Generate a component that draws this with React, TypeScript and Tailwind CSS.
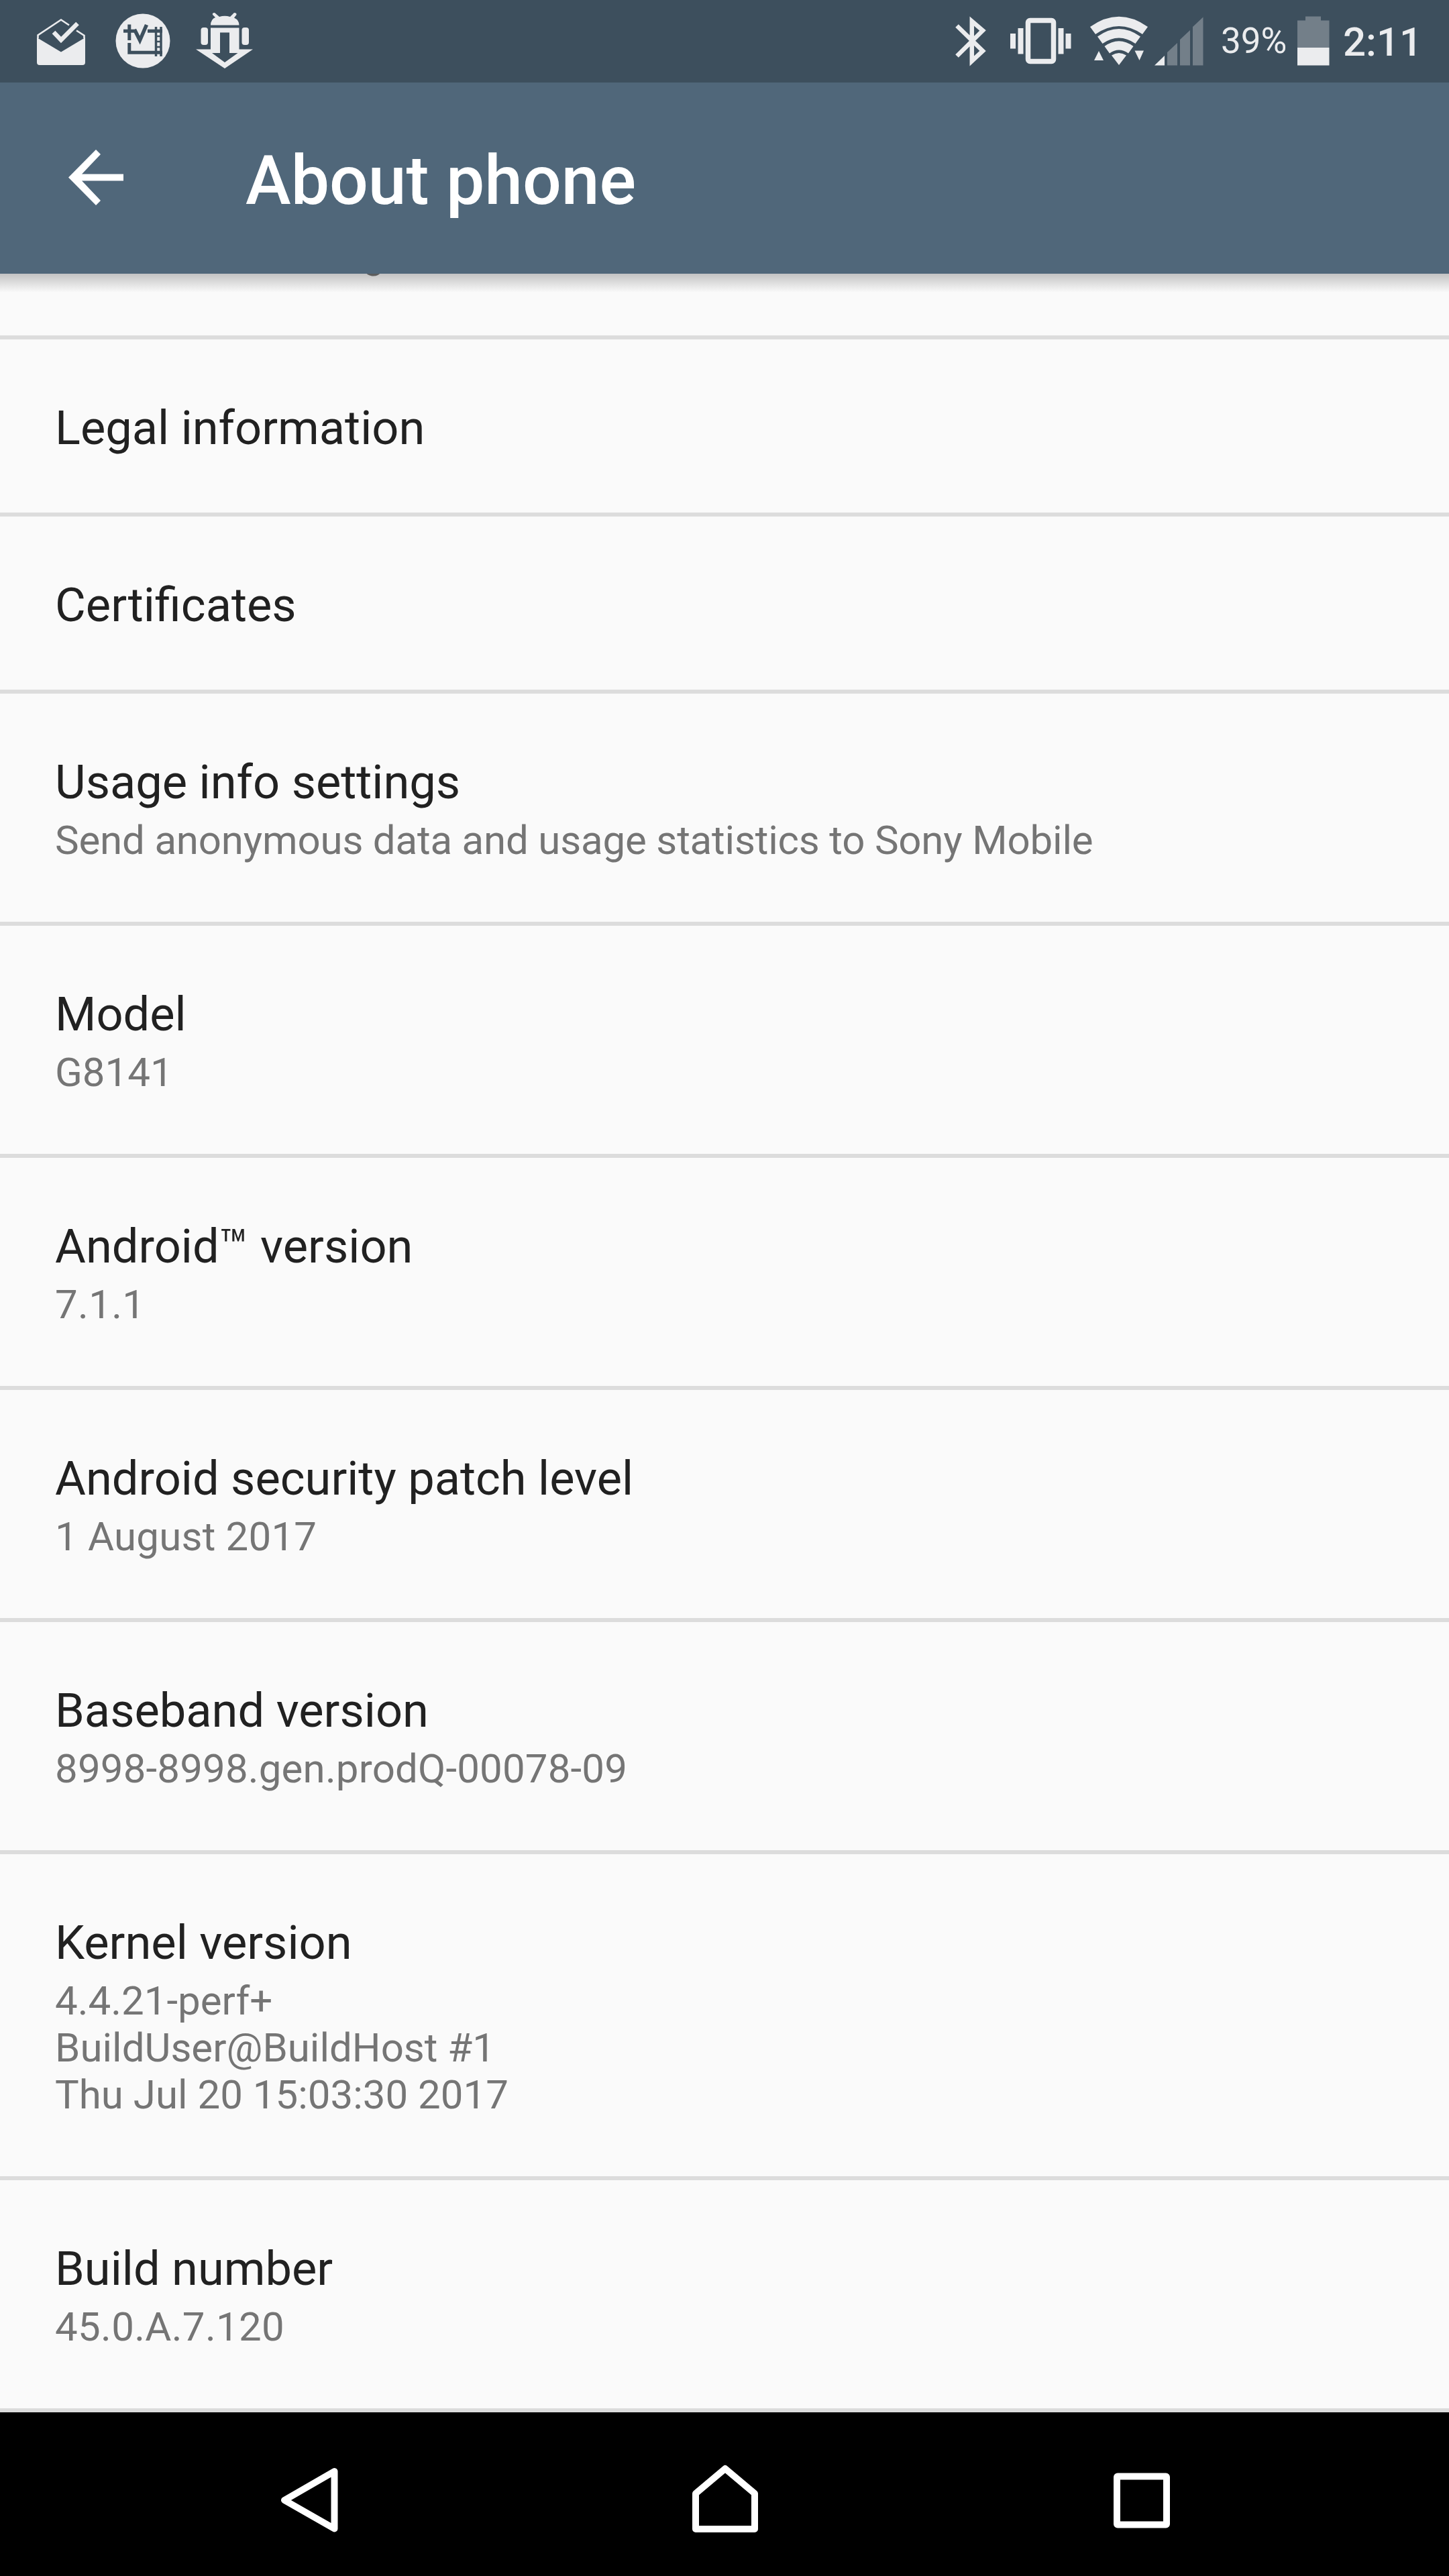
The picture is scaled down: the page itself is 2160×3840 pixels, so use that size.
import type { ReactNode } from 'react';

interface InfoItem {
    title: string;
    summary?: string[];
    tracking?: string;
}

const items: InfoItem[] = [
    { title: 'Legal information' },
    { title: 'Certificates' },
    {
        title: 'Usage info settings',
        summary: ['Send anonymous data and usage statistics to Sony Mobile'],
        tracking: 'tracking-[-0.18px]',
    },
    { title: 'Model', summary: ['G8141'] },
    { title: 'Android™ version', summary: ['7.1.1'], tracking: 'tracking-[0.3px]' },
    { title: 'Android security patch level', summary: ['1 August 2017'], tracking: 'tracking-[0.2px]' },
    { title: 'Baseband version', summary: ['8998-8998.gen.prodQ-00078-09'], tracking: 'tracking-[0.16px]' },
    { title: 'Kernel version', summary: ['4.4.21-perf+', 'BuildUser@BuildHost #1', 'Thu Jul 20 15:03:30 2017'] },
    { title: 'Build number', summary: ['45.0.A.7.120'], tracking: 'tracking-[0.3px]' },
];

function Icon({ w, h, className = '', children }: { w: number; h: number; className?: string; children: ReactNode }) {
    return (
        <svg width={w} height={h} viewBox={`0 0 ${w} ${h}`} fill="currentColor" className={`shrink-0 ${className}`}>
            {children}
        </svg>
    );
}

function StatusBar() {
    return (
        <div className="flex h-[123px] shrink-0 justify-between bg-[#3d4f5d] pl-[54px] text-[#ebecee]">
            <div className="flex">
                {/* Inbox */}
                <Icon w={74} h={123}>
                    <path d="M1 56 L37 77.5 L73 56 V93 Q73 97 69 97 H5 Q1 97 1 93 Z" />
                    <path d="M2.5 57 V52.5 L37 29.5 L49 37.5 M60 45.5 L71.5 53 V57" fill="none" stroke="currentColor" strokeWidth="2.6" />
                    <path d="M26 48 L37 59.5 L61.5 35" fill="none" stroke="currentColor" strokeWidth="6.5" />
                </Icon>
                {/* TV SideView */}
                <Icon w={84} h={123} className="ml-[44px]">
                    <circle cx="41" cy="61" r="40.5" />
                    <g fill="none" stroke="#3d4f5d" strokeWidth="5">
                        <path d="M12 46.3 H31 M48 46.3 H70" />
                        <path d="M20.8 36.5 V60 M20.8 64 V78.3 H70" />
                        <path d="M28.5 44 L36.5 60 L46.5 37" strokeWidth="5.5" />
                        <path d="M60.5 40 V84 M68 40 V84" strokeWidth="3.5" />
                        <path d="M61 54 H68 M61 62 H68 M61 70 H68" strokeWidth="2.5" />
                    </g>
                </Icon>
                {/* Android download */}
                <Icon w={86} h={123} className="ml-[36px]">
                    <path d="M22 37.5 Q22 29 29 26 L25 22 Q24 19 28 19 L35 25 Q43 22.5 51 25 L57 19 Q61 19 60.5 22 L57 26.5 Q64.5 30 64.5 37.5 Z" />
                    <rect x="7.5" y="41" width="10.5" height="26" rx="4" />
                    <rect x="68.5" y="41" width="10.5" height="26" rx="4" />
                    <path fillRule="evenodd" d="M22 41.5 H64.5 V73.5 H85 L43 102 L0 73.5 H22 Z M36 48.5 V79 H24 L43 93 L62.5 79 H50 V48.5 Z" />
                </Icon>
            </div>

            <div className="flex">
                {/* Bluetooth */}
                <Icon w={48} h={123}>
                    <path d="M2.5 38.5 L41 76 L24.8 91 V31.5 L41 45.5 L2.5 83.5" fill="none" stroke="currentColor" strokeWidth="6.5" />
                </Icon>
                {/* Vibrate */}
                <Icon w={92} h={123} className="ml-[33px]">
                    <rect x="1" y="50" width="8" height="22.5" />
                    <rect x="12.5" y="42" width="8" height="38.5" />
                    <rect x="27.5" y="30.5" width="38" height="61" rx="3" fill="none" stroke="currentColor" strokeWidth="7.5" />
                    <rect x="72.5" y="42" width="8" height="38.5" />
                    <rect x="83.5" y="50" width="8" height="22.5" />
                </Icon>
                {/* Wi-Fi */}
                <Icon w={86} h={123} className="ml-[28px]">
                    <path d="M0 40 Q43 9.5 86 40 L78 51 Q43 27 8 51 Z" />
                    <path d="M11 54.5 Q43 31.5 75 54.5 L67.5 65 Q43 48 18.5 65 Z" />
                    <path d="M21.5 69 Q43 53.5 64.5 69 L57 79.5 Q43 69.5 29 79.5 Z" />
                    <path d="M32 82.5 Q43 75.5 54 82.5 L43 97 Z" />
                    <path d="M6 90 L13 76 L20 90 Z M66.5 75.5 H80 L73.5 90 Z" />
                </Icon>
                {/* Mobile signal */}
                <Icon w={74} h={123} className="ml-[10px]">
                    <path d="M0 97.5 L15 83 V97.5 Z" />
                    <path d="M19 97.5 V78 L34 64 V97.5 Z M38 97.5 V59 L53 45 V97.5 Z M57 97.5 V40 L72.5 25.5 V97.5 Z" fill="#737f89" />
                </Icon>
                <span className="ml-[25px] w-[98px] whitespace-nowrap text-[53px] leading-[123px]">39%</span>
                {/* Battery */}
                <Icon w={48} h={123} className="ml-[16px]">
                    <path d="M0 71 V30.5 H12 V24.5 H35 V30.5 H47.5 V71 Z" fill="#737f89" />
                    <rect y="71" width="47.5" height="26.5" />
                </Icon>
                <span className="ml-[20px] w-[158px] whitespace-nowrap text-[60px] font-medium leading-[125px]">2:11</span>
            </div>
        </div>
    );
}

function AppBar() {
    return (
        <header className="relative z-10 flex h-[285px] shrink-0 items-center bg-[#50677a] pl-[102px] text-white">
            <Icon w={82} h={83} className="mb-[2px]">
                <path d="M82 36.5 V46.5 H20 L48 76 L41 83 L0 41.5 L41 0 L48 7 L20 36.5 Z" />
            </Icon>
            <h1 className="ml-[182px] mt-[7px] text-[102px] font-medium leading-[120px]">About phone</h1>
            {/* drop shadow over the list */}
            <div className="absolute inset-x-0 top-full h-[28px] bg-linear-to-b from-black/22 to-transparent" />
        </header>
    );
}

function InfoRow({ title, summary, tracking = '' }: InfoItem) {
    return (
        <li className="border-b-[6px] border-[#dcdcdc] px-[82px] pb-[84px] pt-[90px]">
            <div className="text-[70.4px] leading-[84px] text-[#212121]">{title}</div>
            {summary && (
                <div className={`mb-[2px] mt-[10px] text-[60px] leading-[70px] text-[#757575] ${tracking}`}>
                    {summary.map((line) => (
                        <div key={line}>{line}</div>
                    ))}
                </div>
            )}
        </li>
    );
}

function NavBar() {
    return (
        <nav className="relative flex h-[244px] shrink-0 bg-black pl-[418px] text-white">
            <Icon w={86} h={244}>
                <path d="M6 131 L80.5 88 V173.5 Z" fill="none" stroke="currentColor" strokeWidth="10" strokeLinejoin="round" />
            </Icon>
            <Icon w={98} h={244} className="ml-[528px]">
                <path d="M5 121 L49 84 L93 121 V174 H5 Z" fill="none" stroke="currentColor" strokeWidth="10" strokeLinejoin="round" />
            </Icon>
            <Icon w={84} h={244} className="ml-[530px]">
                <rect x="5" y="95.5" width="74" height="72" rx="1" fill="none" stroke="currentColor" strokeWidth="10" strokeLinejoin="round" />
            </Icon>
        </nav>
    );
}

export default function App() {
    return (
        <div className="flex h-[3840px] w-[2160px] flex-col overflow-hidden bg-[#fafafa] font-['Roboto',sans-serif]">
            <StatusBar />
            <AppBar />
            <main className="min-h-0 flex-1">
                {/* tail of the row scrolled under the app bar */}
                <div className="flex h-[98px] items-start border-b-[6px] border-[#dcdcdc] px-[82px]">
                    <div className="-mt-[64px] text-[60px] leading-[70px] text-[#757575]">Phone number, signal, etc.</div>
                </div>
                <ul>
                    {items.map((item) => (
                        <InfoRow key={item.title} {...item} />
                    ))}
                </ul>
            </main>
            <NavBar />
        </div>
    );
}
